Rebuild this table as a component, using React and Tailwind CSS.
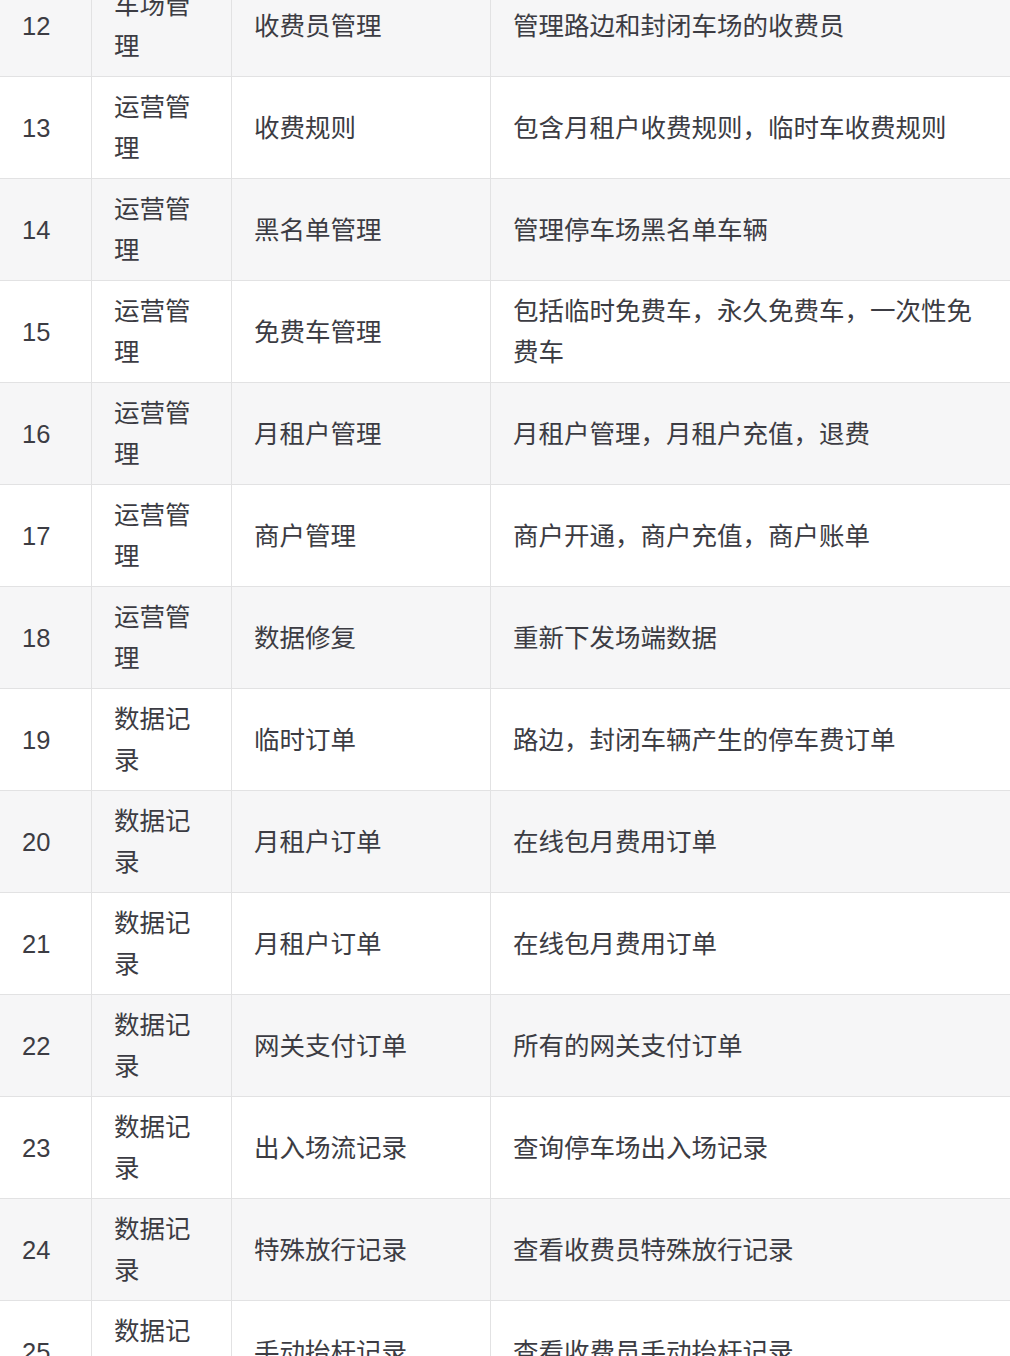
const rows = [
  ["12", "车场管理", "收费员管理", "管理路边和封闭车场的收费员"],
  ["13", "运营管理", "收费规则", "包含月租户收费规则，临时车收费规则"],
  ["14", "运营管理", "黑名单管理", "管理停车场黑名单车辆"],
  ["15", "运营管理", "免费车管理", "包括临时免费车，永久免费车，一次性免费车"],
  ["16", "运营管理", "月租户管理", "月租户管理，月租户充值，退费"],
  ["17", "运营管理", "商户管理", "商户开通，商户充值，商户账单"],
  ["18", "运营管理", "数据修复", "重新下发场端数据"],
  ["19", "数据记录", "临时订单", "路边，封闭车辆产生的停车费订单"],
  ["20", "数据记录", "月租户订单", "在线包月费用订单"],
  ["21", "数据记录", "月租户订单", "在线包月费用订单"],
  ["22", "数据记录", "网关支付订单", "所有的网关支付订单"],
  ["23", "数据记录", "出入场流记录", "查询停车场出入场记录"],
  ["24", "数据记录", "特殊放行记录", "查看收费员特殊放行记录"],
  ["25", "数据记录", "手动抬杆记录", "查看收费员手动抬杆记录"],
];

export default function App() {
  return (
    <div className="h-[1356px] w-[1010px] overflow-hidden bg-white">
      <table
        className="mt-[-26px] ml-[-1px] w-[1014px] min-w-[1014px] table-fixed border-collapse text-[25.5px] leading-[41px] text-[#3c3c43]"
        style={{ fontFamily: '"Liberation Sans", "Noto Sans CJK SC", sans-serif' }}
      >
        <colgroup>
          <col className="w-[92px]" />
          <col className="w-[140px]" />
          <col className="w-[259px]" />
          <col className="w-[523px]" />
        </colgroup>
        <tbody>
          {rows.map((r, i) => (
            <tr key={r[0]} className={i % 2 === 0 ? "bg-[#f6f6f7]" : "bg-white"}>
              {r.map((c, j) => (
                <td
                  key={j}
                  className="border border-[#e2e2e3] px-[22px] pt-[10px] pb-[9px] align-middle"
                >
                  {c}
                </td>
              ))}
            </tr>
          ))}
        </tbody>
      </table>
    </div>
  );
}
